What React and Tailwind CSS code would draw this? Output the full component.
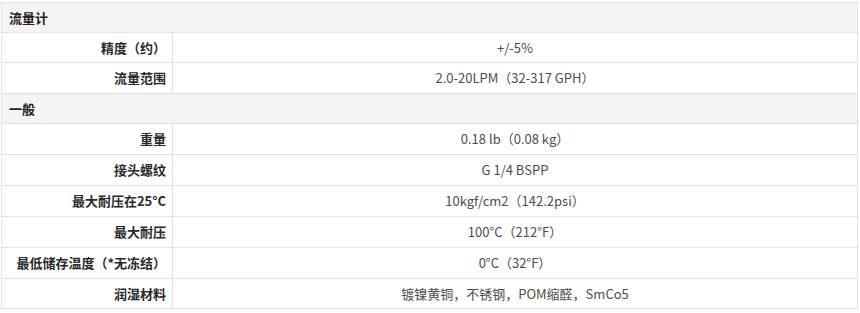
import React from 'react';

// row heights include the 1px top border of each row
const sections = [
    {
        title: '流量计',
        height: 'h-[29px]',
        rows: [
            ['精度（约）', '+/-5%', 'h-[30px]'],
            ['流量范围', '2.0-20LPM（32-317 GPH）', 'h-[31px]'],
        ],
    },
    {
        title: '一般',
        height: 'h-[30px]',
        rows: [
            ['重量', '0.18 lb（0.08 kg）', 'h-[31px]'],
            ['接头螺纹', 'G 1/4 BSPP', 'h-[31px]'],
            ['最大耐压在25°C', '10kgf/cm2（142.2psi）', 'h-[31px]'],
            ['最大耐压', '100°C（212°F）', 'h-[31px]'],
            ['最低储存温度（*无冻结）', '0°C（32°F）', 'h-[31px]'],
            ['润湿材料', '镀镍黄铜，不锈钢，POM缩醛，SmCo5', 'h-[30px]'],
        ],
    },
];

function App() {
    return (
        <div className="w-[860px] h-[313px] bg-white pt-[2px] pl-[1px]" style={{ fontFamily: '"Microsoft YaHei", "Noto Sans CJK SC", sans-serif' }}>
            <div className="w-[857px] border border-[#e2e2e2] text-[13px]">
                {sections.map((section, i) => (
                    <div key={section.title}>
                        <div className={`${section.height} flex items-center px-[7px] bg-[#f4f4f4] font-bold text-[#222] ${i > 0 ? 'border-t border-[#e2e2e2]' : ''}`}>
                            {section.title}
                        </div>
                        {section.rows.map(([label, value, h]) => (
                            <div key={label} className={`${h} flex border-t border-[#e2e2e2]`}>
                                <div className="w-[171px] flex items-center justify-end pr-[6px] font-bold text-[#2a2a2a] border-r border-[#e2e2e2]">
                                    {label}
                                </div>
                                <div className="flex-1 flex items-center justify-center text-[#4d4d4d]">
                                    {value}
                                </div>
                            </div>
                        ))}
                    </div>
                ))}
            </div>
        </div>
    );
}

export default App;
